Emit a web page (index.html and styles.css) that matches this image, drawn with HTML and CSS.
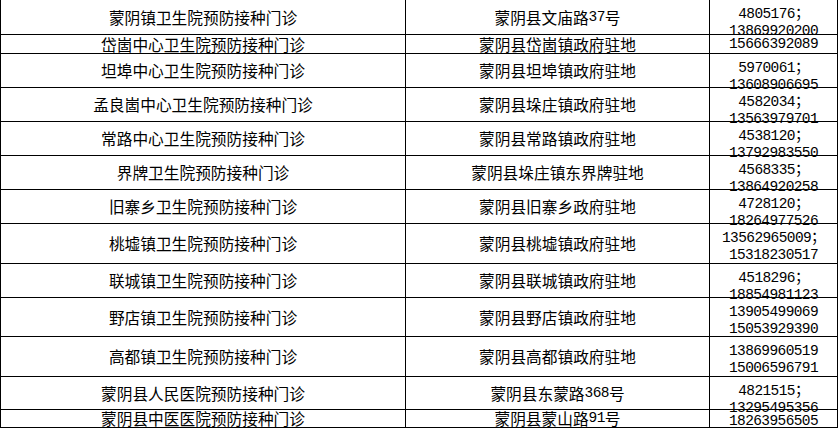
FILE: index.html
```html
<!DOCTYPE html>
<html lang="zh-CN">
<head>
<meta charset="utf-8">
<title>蒙阴县预防接种门诊</title>
<link rel="stylesheet" href="styles.css">
</head>
<body>
<div class="table">
  <div class="cell">蒙阴镇卫生院预防接种门诊</div>
  <div class="cell">蒙阴县文庙路<span class="num">37</span>号</div>
  <div class="cell tel"><p class="lines">4805176；<br>13869920200</p></div>

  <div class="cell">岱崮中心卫生院预防接种门诊</div>
  <div class="cell">蒙阴县岱崮镇政府驻地</div>
  <div class="cell tel one"><p class="lines">15666392089</p></div>

  <div class="cell">坦埠中心卫生院预防接种门诊</div>
  <div class="cell">蒙阴县坦埠镇政府驻地</div>
  <div class="cell tel"><p class="lines">5970061；<br>13608906695</p></div>

  <div class="cell">孟良崮中心卫生院预防接种门诊</div>
  <div class="cell">蒙阴县垛庄镇政府驻地</div>
  <div class="cell tel"><p class="lines">4582034；<br>13563979701</p></div>

  <div class="cell">常路中心卫生院预防接种门诊</div>
  <div class="cell">蒙阴县常路镇政府驻地</div>
  <div class="cell tel"><p class="lines">4538120；<br>13792983550</p></div>

  <div class="cell">界牌卫生院预防接种门诊</div>
  <div class="cell">蒙阴县垛庄镇东界牌驻地</div>
  <div class="cell tel"><p class="lines">4568335；<br>13864920258</p></div>

  <div class="cell">旧寨乡卫生院预防接种门诊</div>
  <div class="cell">蒙阴县旧寨乡政府驻地</div>
  <div class="cell tel"><p class="lines">4728120；<br>18264977526</p></div>

  <div class="cell">桃墟镇卫生院预防接种门诊</div>
  <div class="cell">蒙阴县桃墟镇政府驻地</div>
  <div class="cell tel"><p class="lines">13562965009；<br>15318230517</p></div>

  <div class="cell">联城镇卫生院预防接种门诊</div>
  <div class="cell">蒙阴县联城镇政府驻地</div>
  <div class="cell tel"><p class="lines">4518296；<br>18854981123</p></div>

  <div class="cell">野店镇卫生院预防接种门诊</div>
  <div class="cell">蒙阴县野店镇政府驻地</div>
  <div class="cell tel"><p class="lines">13905499069<br>15053929390</p></div>

  <div class="cell">高都镇卫生院预防接种门诊</div>
  <div class="cell">蒙阴县高都镇政府驻地</div>
  <div class="cell tel"><p class="lines">13869960519<br>15006596791</p></div>

  <div class="cell">蒙阴县人民医院预防接种门诊</div>
  <div class="cell">蒙阴县东蒙路<span class="num">368</span>号</div>
  <div class="cell tel"><p class="lines">4821515；<br>13295495356</p></div>

  <div class="cell">蒙阴县中医医院预防接种门诊</div>
  <div class="cell">蒙阴县蒙山路<span class="num">91</span>号</div>
  <div class="cell tel one low"><p class="lines">18263956505</p></div>
</div>
</body>
</html>
```

FILE: styles.css
```css
html, body {
  margin: 0;
  padding: 0;
  background: #ffffff;
}

body {
  width: 839px;
  height: 429px;
  overflow: hidden;
  font-family: "Noto Sans CJK SC", "Noto Sans", sans-serif;
  font-size: 15.7px;
  color: #000000;
}

.table {
  display: grid;
  grid-template-columns: 405px 304px 128px;
  grid-template-rows: 35px 19px 34px 34px 34px 34px 34px 40px 34px 39px 40px 33px 18px;
  border-left: 1px solid #000;
  width: max-content;
}

.cell {
  box-sizing: border-box;
  display: flex;
  align-items: center;
  justify-content: center;
  text-align: center;
  border-right: 1px solid #000;
  border-bottom: 1px solid #000;
  line-height: 17px;
  white-space: nowrap;
}

.tel {
  align-items: flex-start;
  padding-top: 6px;
}

.tel.one {
  align-items: center;
  padding-top: 0;
}

.tel.one.low {
  align-items: flex-start;
  padding-top: 3px;
}

.lines {
  margin: 0;
  text-align: center;
  font-family: "Liberation Mono", "Noto Sans CJK SC", monospace;
  font-size: 14.5px;
  letter-spacing: -0.6px;
  line-height: 17px;
}

.num {
  font-family: "Liberation Mono", "DejaVu Sans Mono", monospace;
  font-size: 14.5px;
  letter-spacing: -0.6px;
}
```
